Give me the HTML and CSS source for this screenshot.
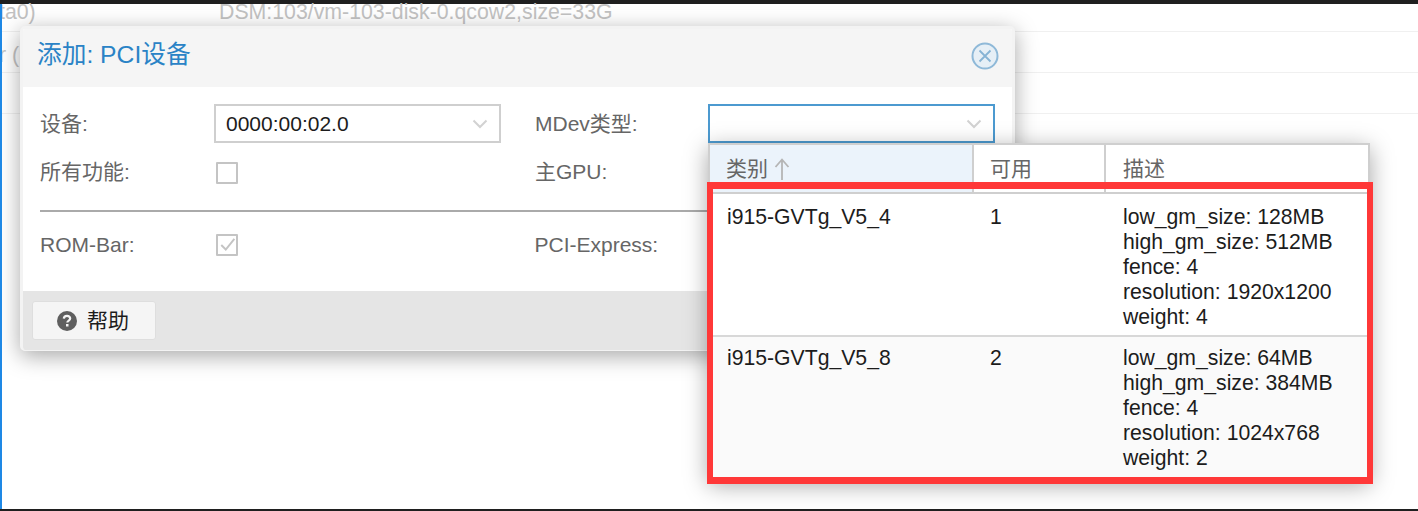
FILE: index.html
```html
<!DOCTYPE html>
<html>
<head>
  <title>添加: PCI设备</title>
  <link rel="stylesheet" href="styles.css">
</head>
<body>
  <div class="topbar"></div>

  <div class="backdrop">
    <div class="bg-row bg-first"><span class="bg-key">ta0)</span><span class="bg-val">DSM:103/vm-103-disk-0.qcow2,size=33G</span></div>
    <div class="bg-row"><span class="bg-key">r (</span></div>
    <div class="bg-row"></div>
  </div>

  <div class="dialog">
    <div class="dialog-head">
      <span class="dialog-title">添加: PCI设备</span>
      <svg class="close" viewBox="0 0 28 28">
        <circle cx="14" cy="14" r="12.5" fill="#e6eff6" stroke="#8fb9d8" stroke-width="2"/>
        <path d="M8.5 8.5 19.5 19.5M19.5 8.5 8.5 19.5" stroke="#86b3d4" stroke-width="1.8" fill="none"/>
      </svg>
    </div>
    <div class="dialog-body">
      <div class="columns">
        <div class="col">
          <div class="field">
            <label>设备:</label>
            <div class="combo">
              <span>0000:00:02.0</span>
              <svg class="chev" viewBox="0 0 16 10"><path d="M1.5 1.5 8 8 14.5 1.5" fill="none" stroke="#d2d2d2" stroke-width="2"/></svg>
            </div>
          </div>
          <div class="field check-row">
            <label>所有功能:</label>
            <span class="check"></span>
          </div>
        </div>
        <div class="col">
          <div class="field">
            <label>MDev类型:</label>
            <div class="combo combo-focus">
              <span></span>
              <svg class="chev" viewBox="0 0 16 10"><path d="M1.5 1.5 8 8 14.5 1.5" fill="none" stroke="#d2d2d2" stroke-width="2"/></svg>
            </div>
          </div>
          <div class="field check-row">
            <label>主GPU:</label>
          </div>
        </div>
      </div>
      <div class="sep"></div>
      <div class="columns">
        <div class="col">
          <div class="field check-row">
            <label>ROM-Bar:</label>
            <span class="check">
              <svg viewBox="0 0 22 22"><path d="M4 11 9.5 16.5 20 3.5" fill="none" stroke="#c4c4c4" stroke-width="2.4"/></svg>
            </span>
          </div>
        </div>
        <div class="col">
          <div class="field check-row">
            <label>PCI-Express:</label>
          </div>
        </div>
      </div>
    </div>
    <div class="dialog-foot">
      <button class="help">
        <svg viewBox="0 0 20 20"><circle cx="10" cy="10" r="10" fill="#5f5f5f"/><path d="M6.8 7.6C6.9 5.8 8.2 4.8 10 4.8 11.9 4.8 13.2 5.9 13.2 7.4 13.2 9.6 10.3 9.5 10.3 11.6" fill="none" stroke="#f5f5f5" stroke-width="2.2"/><rect x="9" y="13" width="2.5" height="2.5" fill="#f5f5f5"/></svg>
        <span>帮助</span>
      </button>
    </div>
  </div>

  <div class="picker">
    <table>
      <thead>
        <tr>
          <th class="c-type sorted">
            类别
            <svg class="arrow" viewBox="0 0 16 22"><path d="M8 22V2M1.5 9 8 1.5 14.5 9" fill="none" stroke="#b5b5b5" stroke-width="1.8"/></svg>
          </th>
          <th class="c-avail">可用</th>
          <th class="c-desc">描述</th>
        </tr>
      </thead>
      <tbody>
        <tr>
          <td>i915-GVTg_V5_4</td>
          <td>1</td>
          <td>low_gm_size: 128MB<br>high_gm_size: 512MB<br>fence: 4<br>resolution: 1920x1200<br>weight: 4</td>
        </tr>
        <tr class="alt">
          <td>i915-GVTg_V5_8</td>
          <td>2</td>
          <td>low_gm_size: 64MB<br>high_gm_size: 384MB<br>fence: 4<br>resolution: 1024x768<br>weight: 2</td>
        </tr>
      </tbody>
    </table>
  </div>

  <div class="callout"></div>
  <div class="edge-left"></div>
  <div class="bottombar"></div>
</body>
</html>
```

FILE: styles.css
```css
* {
  box-sizing: border-box;
}
html,
body {
  margin: 0;
  height: 100%;
  background: #fff;
  overflow: hidden;
}
body {
  position: relative;
  font-family: "Liberation Sans", "Noto Sans CJK SC", sans-serif;
  font-size: 21px;
  color: #1c1c1c;
}
.topbar {
  height: 4px;
  background: #1f1f1f;
}
.bottombar {
  position: absolute;
  left: 0;
  right: 0;
  bottom: 0;
  height: 2px;
  background: #1f1f1f;
}
.edge-left {
  position: absolute;
  left: 0;
  top: 4px;
  bottom: 2px;
  width: 2px;
  background: #1e88e5;
}
.bg-row {
  display: flex;
  height: 41px;
  padding-top: 15px;
  border-bottom: 1px solid #f0f0f0;
  color: #c2c2c2;
  font-size: 21.3px;
  line-height: 17px;
}
.bg-first {
  height: 28px;
  padding-top: 0;
}
.bg-key {
  width: 219px;
  text-indent: -1px;
}
.dialog {
  position: absolute;
  left: 20px;
  top: 26px;
  width: 995px;
  height: 325px;
  display: flex;
  flex-direction: column;
  background: #fff;
  border: solid #f3f3f3;
  border-width: 3px 3px 1px;
  border-radius: 5px;
  box-shadow: 0 5px 22px rgba(0, 0, 0, 0.35);
  overflow: hidden;
}
.dialog-head {
  display: flex;
  align-items: center;
  justify-content: space-between;
  height: 58px;
  padding: 0 13px 4px 14px;
  background: #f5f5f5;
}
.dialog-title {
  margin-bottom: 8px;
  font-size: 24.7px;
  color: #2a83c6;
}
.close {
  width: 28px;
  height: 28px;
}
.dialog-body {
  flex: 1;
  padding: 17px 17px 0;
}
.columns {
  display: flex;
  gap: 34px;
}
.col {
  width: 461px;
}
.field {
  display: flex;
  align-items: center;
  height: 39px;
  color: #666;
}
.field label {
  width: 174px;
  flex: none;
  margin-top: -3px;
}
.col + .col label {
  width: 173px;
}
.check-row {
  height: 22px;
  margin-top: 19px;
}
.check-row label {
  margin-top: -6px;
}
.combo {
  display: flex;
  align-items: center;
  justify-content: space-between;
  width: 287px;
  height: 39px;
  padding: 0 11px 0 10px;
  border: 2px solid #cfcfcf;
  color: #1c1c1c;
}
.combo-focus {
  border-color: #4c9ad0;
}
.chev {
  width: 16px;
  height: 10px;
}
.check {
  width: 22px;
  height: 22px;
  margin-left: 2px;
  border: 2px solid #c4c4c4;
  border-radius: 1px;
}
.check svg {
  display: block;
  width: 18px;
  height: 18px;
}
.sep {
  height: 2px;
  margin-top: 26px;
  background: #aaa;
}
.sep + .columns .check-row {
  margin-top: 22px;
}
.sep + .columns .check-row label {
  margin-top: 0;
}
.dialog-foot {
  height: 59px;
  padding: 10px 9px;
  background: #e5e5e5;
}
.help {
  display: flex;
  align-items: center;
  gap: 10px;
  width: 124px;
  height: 39px;
  padding: 0 0 0 24px;
  border: 1px solid #dedede;
  border-radius: 3px;
  background: #f5f5f5;
  color: #1c1c1c;
  font: inherit;
}
.help svg {
  width: 20px;
  height: 20px;
}
.help span {
  margin-top: -4px;
}
.picker {
  position: absolute;
  left: 708px;
  top: 143px;
  width: 662px;
  background: #fff;
  border: 2px solid #cfcfcf;
  box-shadow: 0 5px 22px rgba(0, 0, 0, 0.35);
}
table {
  width: 100%;
  border-collapse: collapse;
  table-layout: fixed;
}
th {
  height: 48px;
  padding: 0 0 3px 16px;
  font-weight: normal;
  text-align: left;
  color: #666;
  border-right: 2px solid #cfcfcf;
  border-bottom: 2px solid #cfcfcf;
}
th:last-child {
  padding-left: 17px;
  border-right: none;
}
.c-type {
  width: 263px;
}
.c-avail {
  width: 132px;
}
.sorted {
  background: #ebf3fb;
}
.arrow {
  width: 16px;
  height: 22px;
  vertical-align: -4px;
}
td {
  height: 143px;
  padding: 10px 0 0 17px;
  font-size: 21.2px;
  line-height: 25px;
  vertical-align: top;
  border-bottom: 2px solid #d8d8d8;
}
td:last-child {
  padding-left: 18px;
}
.alt td {
  height: 142px;
  padding-top: 8px;
  border-bottom: none;
  background: #fafafa;
}
.callout {
  position: absolute;
  left: 707px;
  top: 182px;
  width: 666px;
  height: 302px;
  border: solid #ff3838;
  border-width: 7px 6px;
}
```
